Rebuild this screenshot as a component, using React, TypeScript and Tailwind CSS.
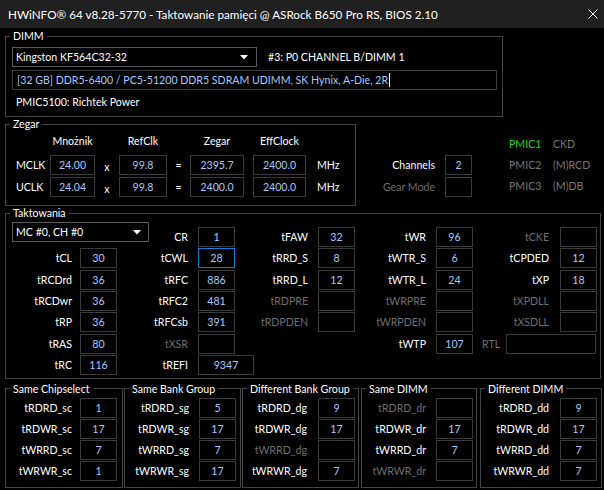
import React from 'react';

type RowProps = { label: string; v?: string; dim?: boolean; lw: string; bw?: string; focus?: boolean };

const Box = ({ v, w = 'w-[37px]', focus }: { v?: string; w?: string; focus?: boolean }) => (
  <div
    className={`${w} h-[20px] shrink-0 flex items-center justify-center border ${
      focus ? 'border-[#0a7fdc]' : 'border-[#3a3a3a]'
    } text-[#a6c8ff]`}
  >
    {v}
  </div>
);

const Row = ({ label, v, dim, lw, bw, focus }: RowProps) => (
  <div className="flex h-[20px] items-center">
    <div className={`${lw} shrink-0 text-right whitespace-nowrap ${dim ? 'text-[#6e6e6e]' : 'text-white'}`}>{label}</div>
    <Box v={v} w={bw} focus={focus} />
  </div>
);

const Group = ({ title, className, children }: { title: string; className: string; children: React.ReactNode }) => (
  <fieldset className={`border border-[#444444] ${className}`}>
    <legend className="ml-[4px] px-[3px] leading-[16px] text-white">{title}</legend>
    {children}
  </fieldset>
);

const Arrow = () => (
  <svg width="8" height="5" viewBox="0 0 8 5" className="shrink-0">
    <path d="M0 0 H8 L4 4.5 Z" fill="#ffffff" />
  </svg>
);

const C1 = 'w-[68px] pr-[8px]';
const C2 = 'w-[81px] pr-[10px]';
const C3 = 'w-[64px] pr-[10px]';
const C4 = 'w-[81px] pr-[10px]';
const C5 = 'w-[87px] pr-[11px]';

const bottom = [
  {
    title: 'Same Chipselect',
    cls: 'w-[118px]',
    lw: 'w-[74px] pr-[8px]',
    rows: [['tRDRD_sc', '1'], ['tRDWR_sc', '17'], ['tWRRD_sc', '7'], ['tWRWR_sc', '1']],
  },
  {
    title: 'Same Bank Group',
    cls: 'w-[117px] ml-[1px]',
    lw: 'w-[74px] pr-[10px]',
    rows: [['tRDRD_sg', '5'], ['tRDWR_sg', '17'], ['tWRRD_sg', '7'], ['tWRWR_sg', '17']],
  },
  {
    title: 'Different Bank Group',
    cls: 'w-[117px] ml-[1px]',
    lw: 'w-[75px] pr-[11px]',
    rows: [['tRDRD_dg', '9'], ['tRDWR_dg', '17'], ['tWRRD_dg', ''], ['tWRWR_dg', '7']],
  },
  {
    title: 'Same DIMM',
    cls: 'w-[116px] ml-[2px]',
    lw: 'w-[74px] pr-[10px]',
    rows: [['tRDRD_dr', ''], ['tRDWR_dr', '17'], ['tWRRD_dr', '7'], ['tWRWR_dr', '']],
  },
  {
    title: 'Different DIMM',
    cls: 'w-[122px] ml-[3px]',
    lw: 'w-[79px] pr-[11px]',
    rows: [['tRDRD_dd', '9'], ['tRDWR_dd', '17'], ['tWRRD_dd', '7'], ['tWRWR_dd', '7']],
  },
];

export default function App() {
  return (
    <div className="w-[604px] h-[490px] overflow-hidden bg-black text-[10.6px] leading-[16px] text-white font-['Lato','Liberation_Sans',sans-serif]">
      {/* title bar */}
      <div className="h-[28px] flex items-center bg-[#202020] pl-[8px] pr-[5px] text-[11.7px]">
        <span>HWiNFO® 64 v8.28-5770 - Taktowanie pamięci @ ASRock B650 Pro RS, BIOS 2.10</span>
        <svg width="10" height="10" viewBox="0 0 10 10" className="ml-auto mr-[1px]">
          <path d="M0.5 0.5 L9.5 9.5 M9.5 0.5 L0.5 9.5" stroke="#ffffff" strokeWidth="1" />
        </svg>
      </div>

      <div className="pl-[5px]">
        {/* DIMM */}
        <Group title="DIMM" className="w-[498px] pb-[6px]">
          <div className="flex items-center mt-[3px] ml-[6px]">
            <div className="w-[245px] h-[20px] flex items-center border border-[#5a5a5a] pl-[3px] pr-[8px]">
              <span>Kingston KF564C32-32</span>
              <span className="ml-auto"><Arrow /></span>
            </div>
            <span className="ml-[11px]">#3: P0 CHANNEL B/DIMM 1</span>
          </div>
          <div className="w-[485px] h-[20px] mt-[3px] ml-[6px] flex items-center border border-[#3a3a3a] pl-[4px] text-[#a6c8ff]">
            <span>[32 GB] DDR5-6400 / PC5-51200 DDR5 SDRAM UDIMM, SK Hynix, A-Die, 2R</span>
            <span className="w-px h-[14px] bg-white ml-px" />
          </div>
          <div className="mt-[4px] ml-[10px]">PMIC5100: Richtek Power</div>
        </Group>

        {/* Zegar + channels */}
        <div className="flex -mt-px">
          <Group title="Zegar" className="w-[351px] pb-[8px]">
            <div className="flex mt-[1px] h-[16px]">
              <div className="w-[44px]" />
              <div className="w-[45px] text-center">Mnożnik</div>
              <div className="w-[24px]" />
              <div className="w-[48px] text-center">RefClk</div>
              <div className="w-[23px]" />
              <div className="w-[54px] text-center">Zegar</div>
              <div className="w-[9px]" />
              <div className="w-[53px] text-center">EffClock</div>
            </div>
            {[
              ['MCLK', '24.00', '99.8', '2395.7', '2400.0', 'mt-[6px]'],
              ['UCLK', '24.04', '99.8', '2400.0', '2400.0', 'mt-[2px]'],
            ].map(([l, a, b, c, d, m]) => (
              <div key={l} className={`flex items-center h-[20px] ${m}`}>
                <div className="w-[44px] pl-[10px]">{l}</div>
                <Box v={a} w="w-[45px]" />
                <div className="w-[24px] text-center pt-[3px]">x</div>
                <Box v={b} w="w-[48px]" />
                <div className="w-[23px] text-center">=</div>
                <Box v={c} w="w-[54px]" />
                <div className="w-[9px]" />
                <Box v={d} w="w-[53px]" />
                <div className="ml-[11px]">MHz</div>
              </div>
            ))}
          </Group>

          <div className="w-[116px] mt-[39px] flex flex-col gap-[2px]">
            <div className="flex items-center justify-end h-[20px]">
              <span className="pr-[10px]">Channels</span>
              <Box v="2" w="w-[27px]" />
            </div>
            <div className="flex items-center justify-end h-[20px]">
              <span className="pr-[10px] text-[#6e6e6e]">Gear Mode</span>
              <Box w="w-[27px]" />
            </div>
          </div>

          <div className="ml-[37px] mt-[18px] leading-[21px] text-[#777777]">
            <div className="flex">
              <span className="w-[44px] text-[#1ed41e]">PMIC1</span>
              <span>CKD</span>
            </div>
            <div className="flex">
              <span className="w-[44px]">PMIC2</span>
              <span>(M)RCD</span>
            </div>
            <div className="flex">
              <span className="w-[44px]">PMIC3</span>
              <span>(M)DB</span>
            </div>
          </div>
        </div>

        {/* Taktowania */}
        <Group title="Taktowania" className="w-[596px] -mt-px pb-[3px]">
          <div className="flex mt-[6px] pl-[6px]">
            <div className="w-[105px] flex flex-col gap-[1.33px]">
              <div className="h-[20px]">
                <div className="w-[137px] h-[20px] -mt-[5px] flex items-center border border-[#5a5a5a] pl-[3px] pr-[7px]">
                  <span>MC #0, CH #0</span>
                  <span className="ml-auto"><Arrow /></span>
                </div>
              </div>
              <Row label="tCL" v="30" lw={C1} />
              <Row label="tRCDrd" v="36" lw={C1} />
              <Row label="tRCDwr" v="36" lw={C1} />
              <Row label="tRP" v="36" lw={C1} />
              <Row label="tRAS" v="80" lw={C1} />
              <Row label="tRC" v="116" lw={C1} />
            </div>
            <div className="w-[137px] flex flex-col gap-[1.33px]">
              <Row label="CR" v="1" lw={C2} />
              <Row label="tCWL" v="28" lw={C2} focus />
              <Row label="tRFC" v="886" lw={C2} />
              <Row label="tRFC2" v="481" lw={C2} />
              <Row label="tRFCsb" v="391" lw={C2} />
              <Row label="tXSR" v="" lw={C2} dim />
              <Row label="tREFI" v="9347" lw={C2} bw="w-[56px]" />
            </div>
            <div className="w-[101px] flex flex-col gap-[1.33px]">
              <Row label="tFAW" v="32" lw={C3} />
              <Row label="tRRD_S" v="8" lw={C3} />
              <Row label="tRRD_L" v="12" lw={C3} />
              <Row label="tRDPRE" v="" lw={C3} dim />
              <Row label="tRDPDEN" v="" lw={C3} dim />
            </div>
            <div className="w-[118px] flex flex-col gap-[1.33px]">
              <Row label="tWR" v="96" lw={C4} />
              <Row label="tWTR_S" v="6" lw={C4} />
              <Row label="tWTR_L" v="24" lw={C4} />
              <Row label="tWRPRE" v="" lw={C4} dim />
              <Row label="tWRPDEN" v="" lw={C4} dim />
              <Row label="tWTP" v="107" lw={C4} />
            </div>
            <div className="w-[124px] flex flex-col gap-[1.33px]">
              <Row label="tCKE" v="" lw={C5} dim />
              <Row label="tCPDED" v="12" lw={C5} />
              <Row label="tXP" v="18" lw={C5} />
              <Row label="tXPDLL" v="" lw={C5} dim />
              <Row label="tXSDLL" v="" lw={C5} dim />
              <div className="flex items-center h-[20px] pl-[9px]">
                <span className="w-[24px] text-[#6e6e6e]">RTL</span>
                <Box w="w-[90px]" />
              </div>
            </div>
          </div>
        </Group>

        {/* bottom groups */}
        <div className="flex mt-[2px]">
          {bottom.map((g) => (
            <Group key={g.title} title={g.title} className={`${g.cls} pb-[6px]`}>
              <div className="flex flex-col gap-[1px] mt-[1px]">
                {g.rows.map(([l, v]) => (
                  <Row key={l} label={l} v={v} lw={g.lw} dim={v === ''} />
                ))}
              </div>
            </Group>
          ))}
        </div>
      </div>
    </div>
  );
}
